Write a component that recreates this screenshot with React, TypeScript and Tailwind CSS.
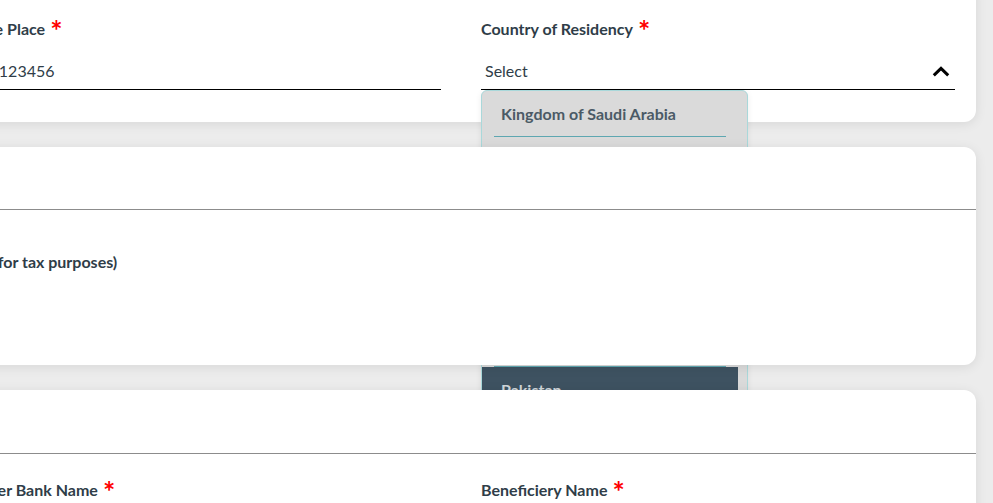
import React from "react"

const countries = [
  "Kingdom of Saudi Arabia",
  "United Arab Emirates",
  "Kuwait",
  "Bahrain",
  "Qatar",
  "Oman",
  "Pakistan",
  "India",
]

function Label({ text }: { text: string }) {
  return (
    <div className="h-[20px] whitespace-nowrap text-[16px] font-bold leading-[20px]">
      {text}
      <span className="relative -top-[4px] ml-[5px] align-top text-[29px] font-bold leading-none text-[#ff0000]">*</span>
    </div>
  )
}

function ChevronUp() {
  return (
    <svg width="18" height="11" viewBox="0 0 18 11" fill="none">
      <path d="M1.8 9.4 L9 2.4 L16.2 9.4" stroke="#000" strokeWidth="3" strokeLinejoin="miter" />
    </svg>
  )
}

function CountryDropdown() {
  return (
    <div className="absolute left-0 top-full h-[330px] w-[267px] overflow-hidden rounded-[6px] border border-[#a9d8da] bg-[#dadada] shadow-[0_2px_6px_rgba(0,0,0,0.08)]">
      <div className="w-[256px]">
        {countries.map((c) => (
          <div key={c} className={c === "Pakistan" ? "bg-[#3e5261] px-[12px]" : "px-[12px]"}>
            <div
              className={
                c === "Pakistan"
                  ? "flex h-[46px] items-center border-b border-[#5ea7b1] px-[7px] text-[16px] font-bold text-[#cfd5d9]"
                  : "flex h-[46px] items-center border-b border-[#5ea7b1] px-[7px] text-[16px] font-bold text-[#4b5a66]"
              }
            >
              {c}
            </div>
          </div>
        ))}
      </div>
    </div>
  )
}

export default function App() {
  return (
    <div className="h-[503px] w-[993px] overflow-hidden bg-[#ececec] font-['Lato',sans-serif] text-[#2f3d48]">
      <div className="-ml-[54px] -mt-[20px] flex w-[1030px] flex-col gap-[25px]">
        {/* personal details */}
        <div className="relative rounded-[12px] bg-white px-[21px] pb-[32px] pt-[39px] shadow-[0_2px_12px_rgba(0,0,0,0.09)]">
          <div className="grid grid-cols-2 gap-x-[40px]">
            <div>
              <Label text="Issue Place" />
              <div className="mt-[14px] flex h-[37px] items-center border-b border-black px-[4px] text-[16px]">
                123123456
              </div>
            </div>
            <div className="relative">
              <Label text="Country of Residency" />
              <div className="mt-[14px] flex h-[37px] items-center justify-between border-b border-black pl-[4px] pr-[5px] text-[16px]">
                <span>Select</span>
                <ChevronUp />
              </div>
              <CountryDropdown />
            </div>
          </div>
        </div>

        {/* tax */}
        <div className="relative rounded-[12px] bg-white shadow-[0_2px_12px_rgba(0,0,0,0.09)]">
          <div className="h-[63px] border-b border-[#8c8c8c]" />
          <div className="h-[155px] px-[17px] pt-[42px]">
            <div className="whitespace-nowrap text-[16px] font-bold leading-[20px]">TIN (for tax purposes)</div>
          </div>
        </div>

        {/* bank */}
        <div className="relative rounded-[12px] bg-white shadow-[0_2px_12px_rgba(0,0,0,0.09)]">
          <div className="h-[64px] border-b border-[#8c8c8c]" />
          <div className="h-[160px] px-[21px] pt-[26px]">
            <div className="grid grid-cols-2 gap-x-[40px]">
              <div className="pl-[3px]">
                <Label text="Issuer Bank Name" />
              </div>
              <Label text="Beneficiery Name" />
            </div>
          </div>
        </div>
      </div>
    </div>
  )
}
